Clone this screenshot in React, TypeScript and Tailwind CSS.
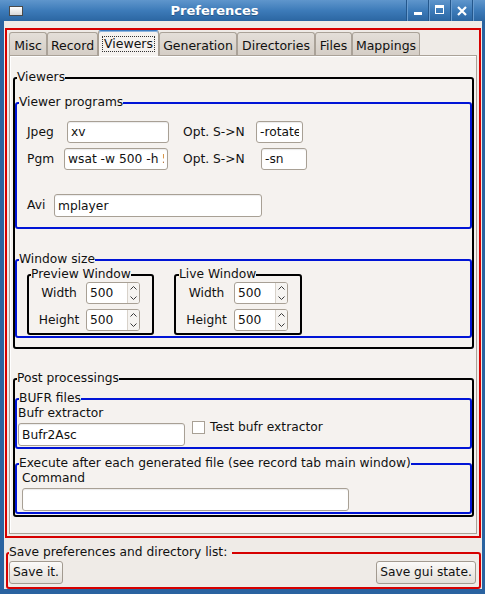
import React from 'react';

type Tone = 'black' | 'blue' | 'red';

const toneBorder: Record<Tone, string> = {
  black: 'border-black',
  blue: 'border-[#0014d6]',
  red: 'border-[#d60000]',
};

interface GroupProps {
  label: string;
  tone: Tone;
  className?: string;
  legendClass?: string;
  children?: React.ReactNode;
}

// framed group with its caption sitting on the top edge
const Group: React.FC<GroupProps> = ({ label, tone, className = '', legendClass = 'ml-[2px]', children }) => (
  <fieldset className={`min-w-0 rounded-[3px] border-2 ${toneBorder[tone]} ${className}`}>
    <legend className={`leading-[15px] ${legendClass}`}>{label}</legend>
    {children}
  </fieldset>
);

const Field: React.FC<{ value: string; className?: string }> = ({ value, className = '' }) => (
  <input
    readOnly
    value={value}
    className={`h-[22px] rounded-[3px] border border-[#a8a095] bg-white px-[3px] text-[12.25px] text-[#111] shadow-[inset_0_1px_1px_rgba(0,0,0,0.08)] outline-none ${className}`}
  />
);

const Chevron: React.FC<{ up?: boolean }> = ({ up }) => (
  <svg width="7" height="4" viewBox="0 0 7 4">
    <path d={up ? 'M0.5 3.5 L3.5 0.5 L6.5 3.5' : 'M0.5 0.5 L3.5 3.5 L6.5 0.5'} fill="none" stroke="#3a3a3a" strokeWidth="1" />
  </svg>
);

const Spin: React.FC<{ value: string }> = ({ value }) => (
  <div className="flex h-[22px] w-[54px] overflow-hidden rounded-[3px] border border-[#a8a095] bg-white">
    <input readOnly value={value} className="w-0 flex-1 px-[3px] text-[12.25px] text-[#111] outline-none" />
    <div className="flex w-[12px] flex-col border-l border-[#d8d2ca] bg-[#f6f4f1]">
      <div className="flex flex-1 items-center justify-center">
        <Chevron up />
      </div>
      <div className="flex flex-1 items-center justify-center">
        <Chevron />
      </div>
    </div>
  </div>
);

const SizeRows: React.FC<{ labelW: string }> = ({ labelW }) => (
  <div className="flex flex-col gap-[5px]">
    <div className="flex items-center">
      <span className={`${labelW} pl-[3px] text-center`}>Width</span>
      <Spin value="500" />
    </div>
    <div className="flex items-center">
      <span className={`${labelW} pl-[3px] text-center`}>Height</span>
      <Spin value="500" />
    </div>
  </div>
);

const tabs = [
  { name: 'Misc', w: 'w-[38px]' },
  { name: 'Record', w: 'w-[51px]' },
  { name: 'Viewers', w: 'w-[61px]', active: true },
  { name: 'Generation', w: 'w-[78px]' },
  { name: 'Directories', w: 'w-[78px]' },
  { name: 'Files', w: 'w-[37px]' },
  { name: 'Mappings', w: 'w-[68px]' },
];

const TitleBar = () => (
  <div className="flex h-[21px] items-stretch bg-gradient-to-b from-[#5f96cc] via-[#3d7bb9] to-[#2b66a2]">
    <div className="ml-[9px] mt-[6px] h-[10px] w-[14px] border border-[#4a4a4a] bg-gradient-to-b from-white to-[#d8d8d8]" />
    <div className="flex-1 text-center text-[13px] font-bold leading-[21px] text-white [text-shadow:0_1px_0_rgba(0,0,0,0.25)]">
      Preferences
    </div>
    <div className="flex">
      <div className="flex w-[22px] items-end justify-center border-l border-l-[#24578c] pb-[6px] shadow-[inset_1px_0_0_#6a9dd0]">
        <div className="h-[3px] w-[8px] bg-white" />
      </div>
      <div className="flex w-[22px] items-start justify-center border-l border-l-[#24578c] pt-[5px] shadow-[inset_1px_0_0_#6a9dd0]">
        <div className="h-[9px] w-[9px] border border-t-[3px] border-white" />
      </div>
      <div className="flex w-[22px] items-center justify-center border-l border-l-[#24578c] shadow-[inset_1px_0_0_#6a9dd0]">
        <svg width="10" height="10" viewBox="0 0 10 10">
          <path d="M1 1 L9 9 M9 1 L1 9" stroke="white" strokeWidth="2.2" />
        </svg>
      </div>
      <div className="w-[13px] border-l border-l-[#24578c] shadow-[inset_1px_0_0_#6a9dd0]" />
    </div>
  </div>
);

export default function App() {
  return (
    <div className="flex h-[594px] w-[485px] flex-col bg-[#2a63a0] font-['DejaVu_Sans','Noto_Sans',sans-serif] text-[12.25px] leading-[15px] text-[#111]">
      <TitleBar />
      <div className="mb-[5px] ml-[4px] mr-[3px] flex flex-1 flex-col bg-[#efebe7]">
        {/* notebook */}
        <div className="ml-[1px] mt-[7px] flex h-[510px] w-[476px] flex-col border-2 border-[#d60000] px-[2px] pb-[2px]">
          <div className="flex h-[25px] items-end text-[12.5px]">
            {tabs.map((t) =>
              t.active ? (
                <div
                  key={t.name}
                  className={`${t.w} relative z-10 -mb-px flex h-[26px] items-center justify-center rounded-t-[3px] border border-b-0 border-[#a8a095] border-t-[#3f7cc0] bg-[#f5f2ef] shadow-[inset_0_1px_0_#8cb4de]`}
                >
                  <span className="border border-dotted border-[#333] px-[1px] leading-[14px]">{t.name}</span>
                </div>
              ) : (
                <div
                  key={t.name}
                  className={`${t.w} flex h-[23px] items-center justify-center rounded-t-[3px] border border-b-0 border-[#aaa298] bg-gradient-to-b from-[#e4dfd9] to-[#d5cec6] pt-[2px]`}
                >
                  {t.name}
                </div>
              ),
            )}
          </div>
          <div className="flex flex-1 flex-col border border-[#aaa298] bg-[#f5f2ef] pl-[3px] pr-[2px] pt-[14px] shadow-[inset_1px_1px_0_#ffffff]">
            <Group label="Viewers" tone="black" className="pb-[9px] pt-[10px]">
              <Group label="Viewer programs" tone="blue" className="pb-[10px]">
                <div className="mt-[11px] flex items-center">
                  <span className="w-[50px] pl-[10px]">Jpeg</span>
                  <Field value="xv" className="w-[102px]" />
                  <span className="ml-[14px] w-[73px]">Opt. S-&gt;N</span>
                  <Field value="-rotate" className="w-[47px]" />
                </div>
                <div className="mt-[5px] flex items-center">
                  <span className="w-[47px] pl-[10px]">Pgm</span>
                  <Field value="wsat -w 500 -h 500" className="w-[104px]" />
                  <span className="ml-[15px] w-[78px]">Opt. S-&gt;N</span>
                  <Field value="-sn" className="w-[46px]" />
                </div>
                <div className="mt-[24px] flex items-center">
                  <span className="w-[37px] pl-[10px]">Avi</span>
                  <Field value="mplayer" className="h-[23px] w-[208px]" />
                </div>
              </Group>
              <Group label="Window size" tone="blue" className="mt-[23px] pb-[1px]">
                <div className="flex pl-[10px]">
                  <Group label="Preview Window" tone="black" className="w-[127px] pb-[2px]" legendClass="ml-[2px]">
                    <SizeRows labelW="w-[57px]" />
                  </Group>
                  <Group label="Live Window" tone="black" className="ml-[20px] w-[128px] pb-[2px]" legendClass="ml-[3px]">
                    <SizeRows labelW="w-[58px]" />
                  </Group>
                </div>
              </Group>
            </Group>

            <Group label="Post processings" tone="black" className="mt-[22px] pb-[1px] pt-[5px]">
              <Group label="BUFR files" tone="blue" className="pb-[1px]">
                <div className="flex items-start">
                  <div className="flex flex-col pl-[1px]">
                    <span>Bufr extractor</span>
                    <Field value="Bufr2Asc" className="mt-[2px] h-[23px] w-[167px]" />
                  </div>
                  <div className="ml-[7px] mt-[14px] flex items-center">
                    <span className="h-[13px] w-[13px] border border-[#a8a095] bg-white" />
                    <span className="ml-[5px]">Test bufr extractor</span>
                  </div>
                </div>
              </Group>
              <Group
                label="Execute after each generated file (see record tab main window)"
                tone="blue"
                className="mt-[7px] pb-[1px]"
              >
                <div className="flex flex-col pl-[5px]">
                  <span>Command</span>
                  <Field value="" className="mt-[2px] h-[23px] w-[327px]" />
                </div>
              </Group>
            </Group>
          </div>
        </div>

        <Group
          label="Save preferences and directory list:"
          tone="red"
          className="ml-[2px] mt-[7px] w-[475px] pb-[3px]"
          legendClass="ml-[1px] pr-[5px]"
        >
          <div className="mt-[1px] flex justify-between pl-[1px] pr-[3px]">
            <button className="h-[23px] w-[54px] rounded-[3px] border border-[#a29a90] bg-gradient-to-b from-[#fbfaf9] to-[#e3ded8] text-[12.25px]">
              Save it.
            </button>
            <button className="h-[23px] w-[100px] rounded-[3px] border border-[#a29a90] bg-gradient-to-b from-[#fbfaf9] to-[#e3ded8] text-[12.25px]">
              Save gui state.
            </button>
          </div>
        </Group>
      </div>
    </div>
  );
}
